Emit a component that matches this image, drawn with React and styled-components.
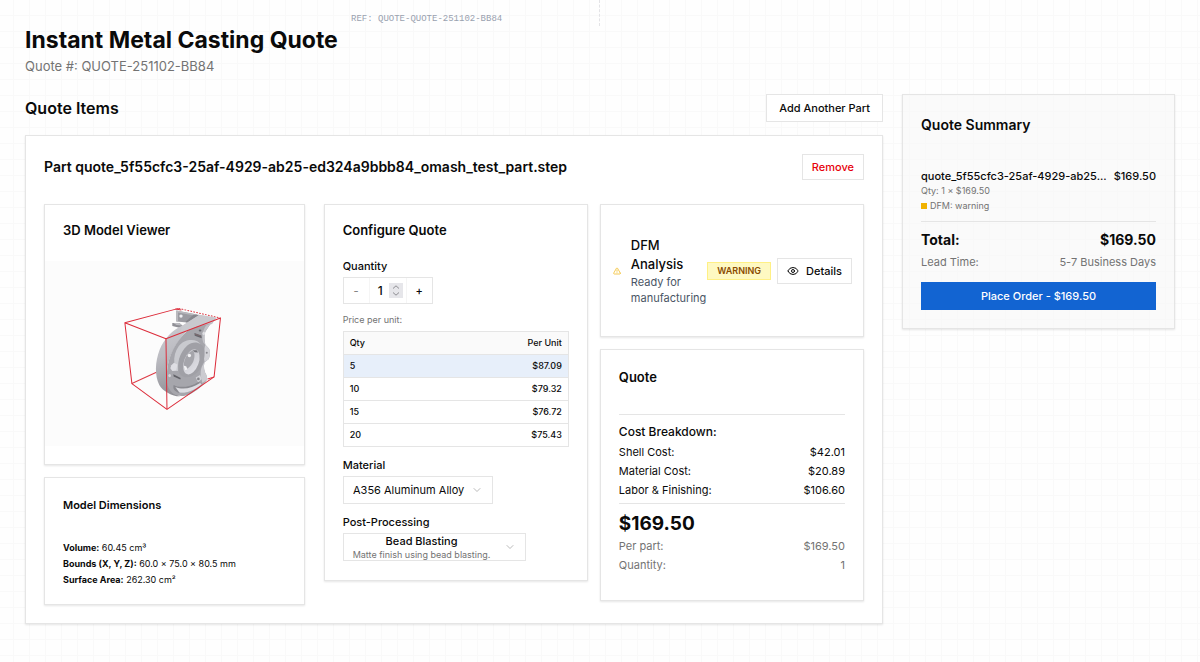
import { useState } from 'react';
import styled, { createGlobalStyle } from 'styled-components';
import { ChevronDown, Eye, TriangleAlert } from 'lucide-react';

const PRICES = [
  { qty: 5, price: '$87.09' },
  { qty: 10, price: '$79.32' },
  { qty: 15, price: '$76.72' },
  { qty: 20, price: '$75.43' },
];

const COSTS = [
  { label: 'Shell Cost:', value: '$42.01' },
  { label: 'Material Cost:', value: '$20.89' },
  { label: 'Labor & Finishing:', value: '$106.60' },
];

const CastingModel = () => (
  <Canvas viewBox="48 213 774 552" role="img" aria-label="3D model of the part">
    <defs>
      <linearGradient id="rim" x1="0" y1="0" x2="0.3" y2="1">
        <stop offset="0" stopColor="#d0d0d5" />
        <stop offset="0.5" stopColor="#bcbcc2" />
        <stop offset="1" stopColor="#8e8e94" />
      </linearGradient>
      <linearGradient id="bore" x1="0" y1="0" x2="1" y2="1">
        <stop offset="0" stopColor="#c3c3c9" />
        <stop offset="1" stopColor="#e2e2e8" />
      </linearGradient>
    </defs>
    <g transform="translate(210 315)">
      {/* hidden edges of the bounding box */}
      <g fill="none" stroke="#dd3a45" strokeWidth="3">
        <path d="M98 264 L178 227" />
        <path d="M238 39 L363 68" strokeDasharray="5 4" />
      </g>
      {/* mounting bracket */}
      <path d="M231 45 L292 57 L300 70 L272 82 L231 78 Z" fill="#9b9ba1" />
      <path d="M231 45 L292 57 L292 62 L236 51 L236 78 L231 78 Z" fill="#b9b9be" />
      <circle cx="245" cy="62" r="5" fill="#eeeef1" />
      <path d="M258 80 L282 58 L298 58 L300 72 L270 84 Z" fill="#87878d" />
      <path d="M219 83 L240 83 L250 91 L243 98 L219 92 Z" fill="#8f8f95" />
      <path d="M222 83 L240 83 L248 90 L232 89 Z" fill="#bcbcc1" />
      {/* rim */}
      <path
        d="M250 90 L300 58 L350 67 L338 86 L262 106 C232 140 206 180 203 230 C202 268 212 292 242 302 C222 303 190 287 180 268 C166 240 167 200 181 163 C194 130 220 102 250 90 Z"
        fill="url(#rim)"
      />
      <path d="M250 90 L300 59 L352 67 L336 82 L290 95 L262 106 L242 110 Z" fill="#c9c9ce" />
      {/* face */}
      <path
        d="M334 84 L318 108 C313 122 316 137 318 148 L329 160 C333 170 332 185 327 191 L315 201 C312 214 314 228 321 238 L324 251 C310 271 290 287 272 296 C256 303 238 303 226 297 C206 285 199 262 203 228 C207 180 230 137 264 106 L291 94 Z"
        fill="#a6a6ac"
      />
      <path d="M334 84 L318 108 C313 122 316 137 318 148 L312 142 C306 126 309 106 320 90 Z" fill="#c4c4c9" />
      <path d="M318 148 L329 160 C333 170 332 185 327 191 L316 200 C312 190 313 162 318 148 Z" fill="#d3d3d8" />
      <path d="M315 201 C312 214 314 228 321 238 L324 251 L309 262 L304 240 C303 224 307 209 315 201 Z" fill="#cbcbd0" />
      {/* raised hub */}
      <path
        d="M238 152 C252 134 276 130 294 137 L306 148 L270 150 L240 190 L236 226 L219 226 L217 212 L225 203 C223 183 228 166 238 152 Z"
        fill="#c9cacf"
      />
      <path d="M224 202 L234 207 L231 224 L219 226 L213 218 L216 209 Z" fill="#dedee3" />
      <path
        d="M263 151 C282 134 307 140 314 159 C320 183 309 214 295 229 C275 249 250 251 240 232 C230 206 241 172 263 151 Z"
        fill="#a0a0a6"
      />
      <ellipse cx="276" cy="199" rx="22" ry="39" transform="rotate(20 276 199)" fill="url(#bore)" />
      <path
        d="M280 165 C288 172 286 190 280 202 C273 214 264 221 256 223 C249 206 256 176 280 165 Z"
        fill="#a5a5ab"
      />
      <path d="M280 164 L292 164 L296 171 L286 170 Z" fill="#77777d" />
      <circle cx="270" cy="180" r="5" fill="#f3f3f5" />
      <path d="M253 210 L261 213 L264 222 L256 224 Z" fill="#f3f3f5" />
      {/* slots and bolt holes */}
      <path d="M285 113 L306 120 L307 128 L286 121 Z" fill="#65656b" />
      <path d="M287 116 L304 122" stroke="#8c6c70" strokeWidth="2" />
      <path d="M222 236 L244 247 L243 252 L223 243 Z" fill="#626268" />
      <ellipse cx="302" cy="105" rx="4" ry="3" fill="#68686e" />
      <ellipse cx="313" cy="114" rx="4" ry="5" fill="#dfdfe3" />
      <ellipse cx="211" cy="240" rx="4" ry="5" fill="#d6d6da" />
      <circle cx="322" cy="172" r="3" fill="#88888e" />
      <path d="M289 246 L302 238 L307 250 L296 260 Z" fill="#d3d3d8" />
      <circle cx="297" cy="250" r="4" fill="#85858b" />
      {/* lower pocket */}
      <path d="M223 268 C238 278 273 275 297 259 L308 264 C290 284 262 294 240 292 C228 288 219 281 223 268 Z" fill="#8a8a90" />
      <path d="M228 274 C250 284 280 277 302 262 L307 265 C289 284 260 294 240 291 Z" fill="#dedee3" />
      {/* bounding box */}
      <g fill="none" stroke="#dc2c3a" strokeWidth="3" strokeLinejoin="round">
        <path d="M238 39 L77 82 L200 130 L363 68 L344 244 L203 341 L98 264 L77 82" />
        <path d="M200 130 L203 341 M325 250 L344 244" />
        <path d="M228 41 L246 44" />
      </g>
    </g>
  </Canvas>
);

const QuantityField = () => {
  const [quantity, setQuantity] = useState(1);
  return (
    <Stepper>
      <StepButton
        type="button"
        aria-label="Decrease quantity"
        disabled={quantity <= 1}
        onClick={() => setQuantity(quantity - 1)}
      >
        -
      </StepButton>
      <StepValue>
        <input
          id="quantity"
          type="number"
          min="1"
          value={quantity}
          onChange={(e) => setQuantity(Math.max(1, Number(e.target.value)))}
        />
        <svg width="14" height="15" viewBox="0 0 14 15" aria-hidden="true">
          <rect width="14" height="15" fill="#e6e6ea" />
          <path d="M4 5.5 L7 2.8 L10 5.5 M4 9.5 L7 12.2 L10 9.5" />
        </svg>
      </StepValue>
      <StepButton
        type="button"
        aria-label="Increase quantity"
        onClick={() => setQuantity(quantity + 1)}
      >
        +
      </StepButton>
    </Stepper>
  );
};

const App = () => {
  return (
    <>
      <GlobalStyle />
      <RefStrip>REF: QUOTE-QUOTE-251102-BB84</RefStrip>
      <Page>
        <header>
          <PageTitle>Instant Metal Casting Quote</PageTitle>
          <QuoteNumber>Quote #: QUOTE-251102-BB84</QuoteNumber>
        </header>
        <Layout>
          <main>
            <ItemsBar>
              <SectionTitle>Quote Items</SectionTitle>
              <Button type="button">Add Another Part</Button>
            </ItemsBar>
            <PartCard>
              <PartHeader>
                <h3>
                  Part quote_5f55cfc3-25af-4929-ab25-ed324a9bbb84_omash_test_part.step
                </h3>
                <Button type="button" $small $danger>
                  Remove
                </Button>
              </PartHeader>
              <PartGrid>
                <Column>
                  <ViewerCard>
                    <CardTitle>3D Model Viewer</CardTitle>
                    <CastingModel />
                  </ViewerCard>
                  <Card>
                    <CardTitle $small $tall>
                      Model Dimensions
                    </CardTitle>
                    <Dimensions>
                      <p>
                        <strong>Volume:</strong> 60.45 cm³
                      </p>
                      <p>
                        <strong>Bounds (X, Y, Z):</strong> 60.0 × 75.0 × 80.5 mm
                      </p>
                      <p>
                        <strong>Surface Area:</strong> 262.30 cm²
                      </p>
                    </Dimensions>
                  </Card>
                </Column>
                <ConfigGrid>
                  <Card>
                    <CardTitle>Configure Quote</CardTitle>
                    <Fields>
                      <Field>
                        <Label htmlFor="quantity">Quantity</Label>
                        <QuantityField />
                        <PriceNote>Price per unit:</PriceNote>
                        <PriceTable>
                          <thead>
                            <tr>
                              <th>Qty</th>
                              <th>Per Unit</th>
                            </tr>
                          </thead>
                          <tbody>
                            {PRICES.map((row, i) => (
                              <PriceRow key={row.qty} $active={i === 0}>
                                <td>{row.qty}</td>
                                <td>{row.price}</td>
                              </PriceRow>
                            ))}
                          </tbody>
                        </PriceTable>
                      </Field>
                      <Field>
                        <Label htmlFor="material">Material</Label>
                        <SelectBox>
                          <Select id="material">
                            <option>A356 Aluminum Alloy</option>
                          </Select>
                          <ChevronDown size={12} />
                        </SelectBox>
                      </Field>
                      <Field>
                        <Label htmlFor="post">Post-Processing</Label>
                        <SelectBox>
                          <OptionStack>
                            <Select id="post" $strong>
                              <option>Bead Blasting</option>
                            </Select>
                            <span>Matte finish using bead blasting.</span>
                          </OptionStack>
                          <ChevronDown size={12} />
                        </SelectBox>
                      </Field>
                    </Fields>
                  </Card>
                  <Column>
                    <DfmCard>
                      <TriangleAlert size={8} color="#f0b100" />
                      <DfmText>
                        <h4>DFM Analysis</h4>
                        <p>Ready for manufacturing</p>
                      </DfmText>
                      <DfmActions>
                        <Badge>WARNING</Badge>
                        <Button type="button" $small>
                          <Eye size={12} />
                          Details
                        </Button>
                      </DfmActions>
                    </DfmCard>
                    <Card>
                      <CardTitle $tall>Quote</CardTitle>
                      <Breakdown>
                        <h5>Cost Breakdown:</h5>
                        {COSTS.map((cost) => (
                          <Line key={cost.label}>
                            <span>{cost.label}</span>
                            <span>{cost.value}</span>
                          </Line>
                        ))}
                      </Breakdown>
                      <Totals>
                        <BigPrice>$169.50</BigPrice>
                        <Line $muted>
                          <span>Per part:</span>
                          <span>$169.50</span>
                        </Line>
                        <Line $muted>
                          <span>Quantity:</span>
                          <span>1</span>
                        </Line>
                      </Totals>
                    </Card>
                  </Column>
                </ConfigGrid>
              </PartGrid>
            </PartCard>
          </main>
          <Summary>
            <h2>Quote Summary</h2>
            <SummaryItem>
              <div>
                <b>quote_5f55cfc3-25af-4929-ab25...</b>
                <span>$169.50</span>
              </div>
              <p>Qty: 1 × $169.50</p>
              <Status>DFM: warning</Status>
            </SummaryItem>
            <TotalLine>
              <span>Total:</span>
              <span>$169.50</span>
            </TotalLine>
            <Line $muted>
              <span>Lead Time:</span>
              <span>5-7 Business Days</span>
            </Line>
            <OrderButton type="button">Place Order - $169.50</OrderButton>
          </Summary>
        </Layout>
      </Page>
    </>
  );
};

const GlobalStyle = createGlobalStyle`
  * {
    margin: 0;
    padding: 0;
    box-sizing: border-box;
  }
  body {
    color: #0a0a0a;
    font-family: Inter, sans-serif;
    font-size: 11px;
    line-height: 16px;
    background-color: #fefefe;
    background-image:
      linear-gradient(to right, #f9f9f9 1px, transparent 1px),
      linear-gradient(to bottom, #f9f9f9 1px, transparent 1px);
    background-size: 16px 16px;
    background-position: 13px 15px;
  }
  button, input, select {
    font-family: inherit;
    color: inherit;
  }
`;

const RefStrip = styled.div`
  width: 50%;
  height: 26px;
  padding: 12px 0 0 351px;
  border-right: 1px dashed #e3e3e6;
  color: #99a1af;
  font-family: 'Liberation Mono', monospace;
  font-size: 9px;
  line-height: 14px;
  white-space: nowrap;
`;

const Page = styled.div`
  padding: 0 25px 36px;
`;

const PageTitle = styled.h1`
  font-size: 23px;
  font-weight: 700;
  line-height: 28px;
`;

const QuoteNumber = styled.p`
  margin-top: 4px;
  color: #737373;
  font-size: 13px;
`;

const Layout = styled.div`
  display: grid;
  grid-template-columns: minmax(0, 1fr) 273px;
  align-items: start;
  gap: 19px;
  margin-top: 20px;
`;

const ItemsBar = styled.div`
  display: flex;
  align-items: center;
  justify-content: space-between;
  margin-bottom: 13px;
`;

const SectionTitle = styled.h2`
  font-size: 16px;
  font-weight: 600;
  line-height: 22px;
`;

const Button = styled.button`
  display: flex;
  align-items: center;
  gap: 7px;
  height: ${({ $small }) => ($small ? '26px' : '28px')};
  padding: 0 ${({ $small }) => ($small ? '9px' : '12px')};
  color: ${({ $danger }) => ($danger ? '#e7000b' : '#0a0a0a')};
  font-size: 11px;
  font-weight: 500;
  white-space: nowrap;
  background: #fff;
  border: 1px solid #e5e5e5;
  cursor: pointer;
`;

const Card = styled.section`
  padding: 16px 18px;
  background: #fff;
  border: 1px solid #e5e5e5;
  box-shadow: 0 1px 2px rgba(0, 0, 0, 0.1);
`;

const PartCard = styled(Card)`
  padding: 18px;
`;

const PartHeader = styled.div`
  display: flex;
  align-items: center;
  justify-content: space-between;
  margin-bottom: 24px;
  h3 {
    font-size: 14px;
    font-weight: 600;
    line-height: 18px;
  }
`;

const PartGrid = styled.div`
  display: grid;
  grid-template-columns: repeat(3, minmax(0, 1fr));
  align-items: start;
  gap: 19px;
`;

const ConfigGrid = styled.div`
  display: grid;
  grid-column: span 2;
  grid-template-columns: repeat(2, minmax(0, 1fr));
  align-items: start;
  gap: 12px;
`;

const Column = styled.div`
  display: flex;
  flex-direction: column;
  gap: 12px;
`;

const CardTitle = styled.h4`
  font-size: ${({ $small }) => ($small ? '11px' : '13px')};
  font-weight: 600;
  line-height: ${({ $tall }) => ($tall ? '22px' : '18px')};
`;

const ViewerCard = styled(Card)`
  padding: 16px 0 18px;
  h4 {
    padding: 0 18px;
    margin-bottom: 22px;
  }
`;

const Canvas = styled.svg`
  display: block;
  width: 100%;
  height: 185px;
  background: #fcfcfc;
`;

const Dimensions = styled.div`
  margin-top: 24px;
  font-size: 9px;
`;

const Fields = styled.div`
  display: flex;
  flex-direction: column;
  gap: 10px;
  margin: 19px 0 3px;
`;

const Field = styled.div`
  display: flex;
  flex-direction: column;
  align-items: flex-start;
`;

const Label = styled.label`
  margin-bottom: 3px;
  font-weight: 500;
`;

const Stepper = styled.div`
  display: flex;
  height: 27px;
  border: 1px solid #e5e5e5;
`;

const StepButton = styled.button`
  width: 25px;
  font-size: 11px;
  font-weight: 500;
  background: none;
  border: 0;
  &:disabled {
    color: #858585;
  }
`;

const StepValue = styled.div`
  display: flex;
  align-items: center;
  padding-right: 3px;
  border: solid #f5f5f5;
  border-width: 0 1px;
  input {
    width: 19px;
    font-size: 12px;
    font-weight: 500;
    text-align: right;
    padding-right: 6px;
    background: none;
    border: 0;
    appearance: textfield;
  }
  input::-webkit-inner-spin-button {
    display: none;
  }
  path {
    fill: none;
    stroke: #8e8e93;
  }
`;

const PriceNote = styled.p`
  margin: 8px 0 3px;
  color: #737373;
  font-size: 9px;
`;

const PriceTable = styled.table`
  width: 100%;
  border: 1px solid #e5e5e5;
  border-collapse: collapse;
  font-size: 9px;
  font-weight: 500;
  line-height: 14px;
  th,
  td {
    height: 23px;
    padding: 0 6px;
    text-align: left;
    font-weight: 500;
  }
  th:last-child,
  td:last-child {
    text-align: right;
  }
  thead {
    background: #fafafa;
  }
`;

const PriceRow = styled.tr`
  border-top: 1px solid #e5e5e5;
  background: ${({ $active }) => ($active ? '#e7effa' : '#fff')};
`;

const SelectBox = styled.div`
  display: flex;
  align-items: center;
  gap: 6px;
  height: 28px;
  padding: 0 9px;
  overflow: hidden;
  border: 1px solid #e5e5e5;
  svg {
    color: #a3a3a3;
    stroke-width: 1.5;
  }
`;

const Select = styled.select`
  font-size: 11px;
  font-weight: ${({ $strong }) => ($strong ? 500 : 400)};
  line-height: 14px;
  text-align: center;
  background: none;
  border: 0;
  appearance: none;
`;

const OptionStack = styled.div`
  display: flex;
  flex-direction: column;
  padding-top: 2px;
  margin-right: 8px;
  color: #0a0a0a;
  span {
    color: #737373;
    font-size: 9px;
    line-height: 14px;
  }
`;

const DfmCard = styled(Card)`
  display: flex;
  align-items: center;
  height: 133px;
  padding: 0 11px 0 12px;
  > svg {
    flex: none;
    margin-right: 10px;
  }
`;

const DfmText = styled.div`
  flex: 1;
  min-width: 0;
  h4 {
    width: min-content;
    font-size: 13px;
    font-weight: 500;
    line-height: 19px;
  }
  p {
    color: #4a5565;
  }
`;

const DfmActions = styled.div`
  display: flex;
  align-items: center;
  gap: 6px;
`;

const Badge = styled.span`
  padding: 0 9px;
  color: #894b00;
  font-size: 9px;
  font-weight: 600;
  background: #fef9c2;
  border: 1px solid #fff085;
`;

const Breakdown = styled.div`
  margin-top: 26px;
  padding: 7px 0 3px;
  border: solid #e5e5e5;
  border-width: 1px 0;
  h5 {
    margin-bottom: 2px;
    font-size: 12px;
    font-weight: 500;
    line-height: 19px;
  }
`;

const Line = styled.div`
  display: flex;
  justify-content: space-between;
  color: ${({ $muted }) => ($muted ? '#737373' : '#0a0a0a')};
  line-height: 19px;
`;

const Totals = styled.div`
  padding: 8px 0 9px;
`;

const BigPrice = styled.p`
  margin-bottom: 1px;
  font-size: 19px;
  font-weight: 700;
  line-height: 24px;
`;

const Summary = styled.aside`
  padding: 18px;
  background: rgba(248, 248, 248, 0.7);
  border: 1px solid #e5e5e5;
  box-shadow: 0 1px 2px rgba(0, 0, 0, 0.1);
  h2 {
    margin-bottom: 31px;
    font-size: 14px;
    font-weight: 600;
    line-height: 24px;
  }
`;

const SummaryItem = styled.div`
  padding-bottom: 7px;
  border-bottom: 1px solid #e5e5e5;
  color: #737373;
  font-size: 9px;
  div {
    display: flex;
    justify-content: space-between;
    color: #0a0a0a;
    font-size: 11px;
    font-weight: 500;
    white-space: nowrap;
  }
  b {
    font-weight: 500;
  }
  p {
    line-height: 13px;
  }
`;

const Status = styled.span`
  display: flex;
  align-items: center;
  gap: 3px;
  margin-top: 1px;
  &::before {
    width: 6px;
    height: 6px;
    background: #f0b100;
    content: '';
  }
`;

const TotalLine = styled.div`
  display: flex;
  justify-content: space-between;
  margin: 6px 0 1px;
  font-size: 14px;
  font-weight: 700;
  line-height: 24px;
`;

const OrderButton = styled.button`
  width: 100%;
  height: 28px;
  margin-top: 10px;
  color: #fff;
  font-size: 11px;
  font-weight: 500;
  background: #1264d2;
  border: 0;
  cursor: pointer;
`;

export default App;
